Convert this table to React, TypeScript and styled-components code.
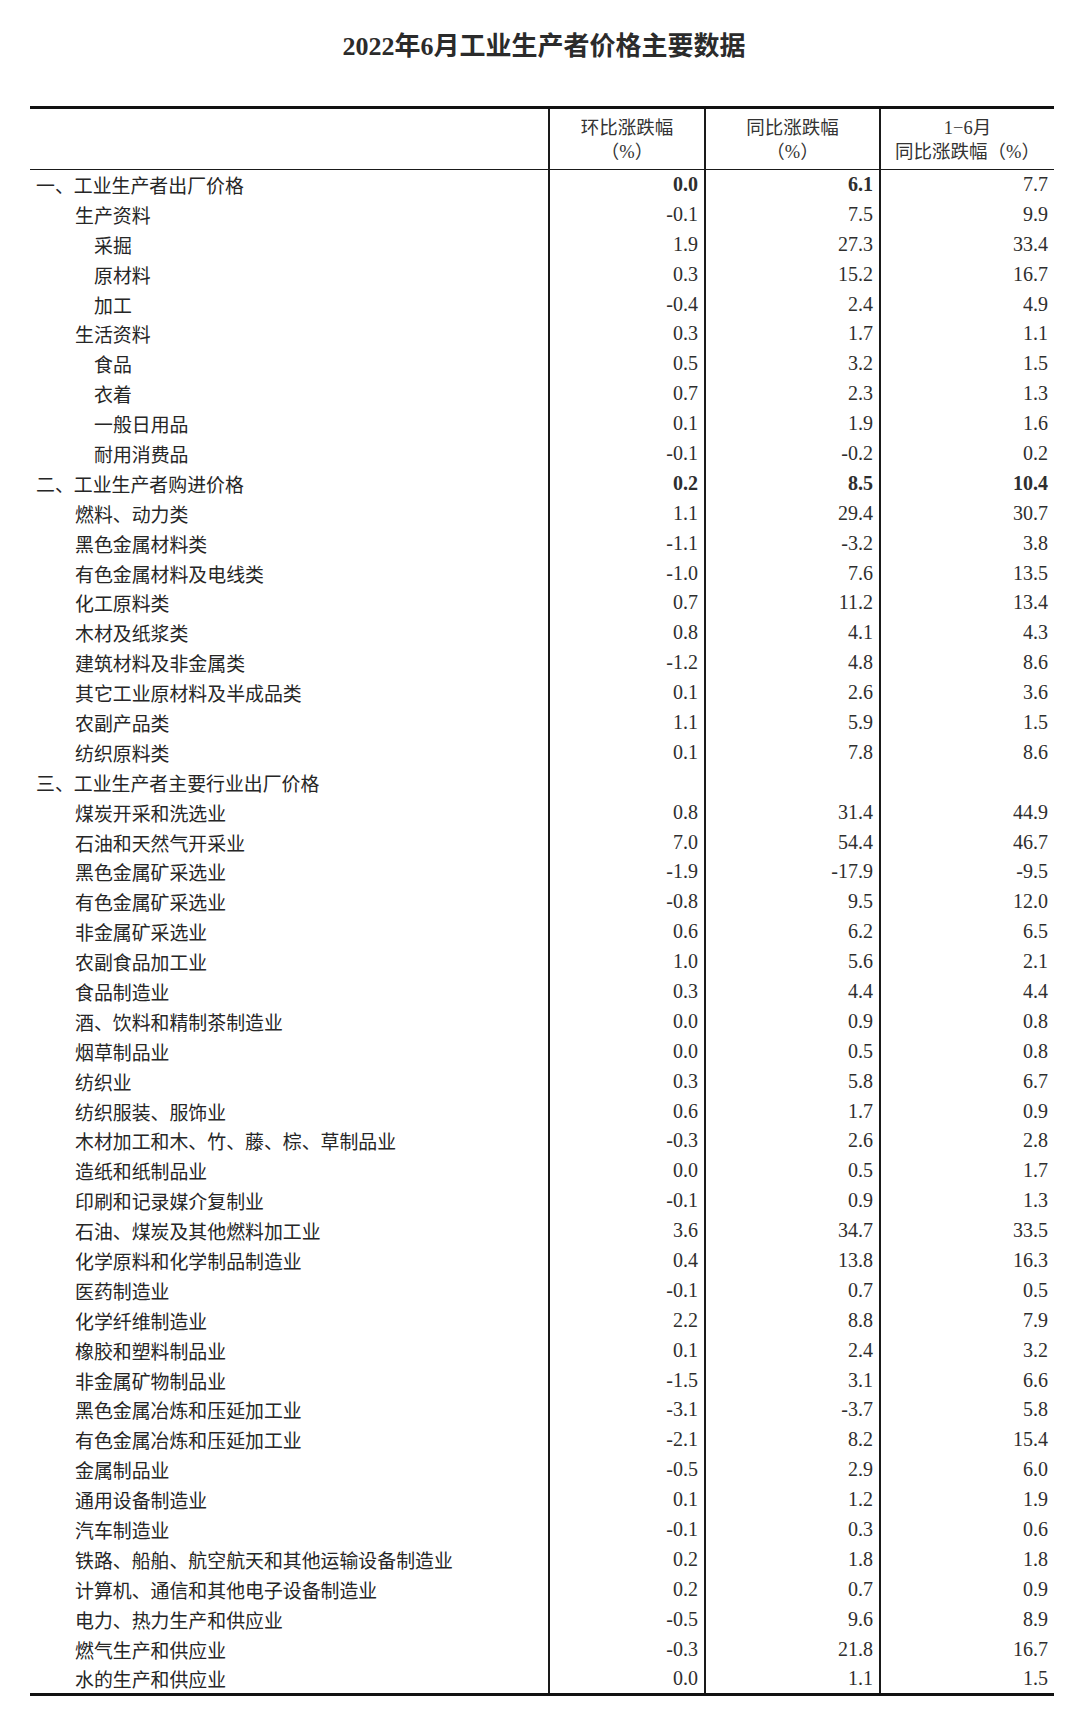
import React from "react"
import styled, { createGlobalStyle } from "styled-components"

type Row = {
  label: string
  level: 0 | 1 | 2
  values: string[]
  bold?: boolean[]
}

const rows: Row[] = [
  { label: "一、工业生产者出厂价格", level: 0, values: ["0.0", "6.1", "7.7"], bold: [true, true, false] },
  { label: "生产资料", level: 1, values: ["-0.1", "7.5", "9.9"] },
  { label: "采掘", level: 2, values: ["1.9", "27.3", "33.4"] },
  { label: "原材料", level: 2, values: ["0.3", "15.2", "16.7"] },
  { label: "加工", level: 2, values: ["-0.4", "2.4", "4.9"] },
  { label: "生活资料", level: 1, values: ["0.3", "1.7", "1.1"] },
  { label: "食品", level: 2, values: ["0.5", "3.2", "1.5"] },
  { label: "衣着", level: 2, values: ["0.7", "2.3", "1.3"] },
  { label: "一般日用品", level: 2, values: ["0.1", "1.9", "1.6"] },
  { label: "耐用消费品", level: 2, values: ["-0.1", "-0.2", "0.2"] },
  { label: "二、工业生产者购进价格", level: 0, values: ["0.2", "8.5", "10.4"], bold: [true, true, true] },
  { label: "燃料、动力类", level: 1, values: ["1.1", "29.4", "30.7"] },
  { label: "黑色金属材料类", level: 1, values: ["-1.1", "-3.2", "3.8"] },
  { label: "有色金属材料及电线类", level: 1, values: ["-1.0", "7.6", "13.5"] },
  { label: "化工原料类", level: 1, values: ["0.7", "11.2", "13.4"] },
  { label: "木材及纸浆类", level: 1, values: ["0.8", "4.1", "4.3"] },
  { label: "建筑材料及非金属类", level: 1, values: ["-1.2", "4.8", "8.6"] },
  { label: "其它工业原材料及半成品类", level: 1, values: ["0.1", "2.6", "3.6"] },
  { label: "农副产品类", level: 1, values: ["1.1", "5.9", "1.5"] },
  { label: "纺织原料类", level: 1, values: ["0.1", "7.8", "8.6"] },
  { label: "三、工业生产者主要行业出厂价格", level: 0, values: ["", "", ""] },
  { label: "煤炭开采和洗选业", level: 1, values: ["0.8", "31.4", "44.9"] },
  { label: "石油和天然气开采业", level: 1, values: ["7.0", "54.4", "46.7"] },
  { label: "黑色金属矿采选业", level: 1, values: ["-1.9", "-17.9", "-9.5"] },
  { label: "有色金属矿采选业", level: 1, values: ["-0.8", "9.5", "12.0"] },
  { label: "非金属矿采选业", level: 1, values: ["0.6", "6.2", "6.5"] },
  { label: "农副食品加工业", level: 1, values: ["1.0", "5.6", "2.1"] },
  { label: "食品制造业", level: 1, values: ["0.3", "4.4", "4.4"] },
  { label: "酒、饮料和精制茶制造业", level: 1, values: ["0.0", "0.9", "0.8"] },
  { label: "烟草制品业", level: 1, values: ["0.0", "0.5", "0.8"] },
  { label: "纺织业", level: 1, values: ["0.3", "5.8", "6.7"] },
  { label: "纺织服装、服饰业", level: 1, values: ["0.6", "1.7", "0.9"] },
  { label: "木材加工和木、竹、藤、棕、草制品业", level: 1, values: ["-0.3", "2.6", "2.8"] },
  { label: "造纸和纸制品业", level: 1, values: ["0.0", "0.5", "1.7"] },
  { label: "印刷和记录媒介复制业", level: 1, values: ["-0.1", "0.9", "1.3"] },
  { label: "石油、煤炭及其他燃料加工业", level: 1, values: ["3.6", "34.7", "33.5"] },
  { label: "化学原料和化学制品制造业", level: 1, values: ["0.4", "13.8", "16.3"] },
  { label: "医药制造业", level: 1, values: ["-0.1", "0.7", "0.5"] },
  { label: "化学纤维制造业", level: 1, values: ["2.2", "8.8", "7.9"] },
  { label: "橡胶和塑料制品业", level: 1, values: ["0.1", "2.4", "3.2"] },
  { label: "非金属矿物制品业", level: 1, values: ["-1.5", "3.1", "6.6"] },
  { label: "黑色金属冶炼和压延加工业", level: 1, values: ["-3.1", "-3.7", "5.8"] },
  { label: "有色金属冶炼和压延加工业", level: 1, values: ["-2.1", "8.2", "15.4"] },
  { label: "金属制品业", level: 1, values: ["-0.5", "2.9", "6.0"] },
  { label: "通用设备制造业", level: 1, values: ["0.1", "1.2", "1.9"] },
  { label: "汽车制造业", level: 1, values: ["-0.1", "0.3", "0.6"] },
  { label: "铁路、船舶、航空航天和其他运输设备制造业", level: 1, values: ["0.2", "1.8", "1.8"] },
  { label: "计算机、通信和其他电子设备制造业", level: 1, values: ["0.2", "0.7", "0.9"] },
  { label: "电力、热力生产和供应业", level: 1, values: ["-0.5", "9.6", "8.9"] },
  { label: "燃气生产和供应业", level: 1, values: ["-0.3", "21.8", "16.7"] },
  { label: "水的生产和供应业", level: 1, values: ["0.0", "1.1", "1.5"] },
]

const indent = [0, 39, 58]

const App = () => {
  return (
    <>
      <GlobalStyle />
      <Page>
        <Title>2022年6月工业生产者价格主要数据</Title>
        <Table>
          <colgroup>
            <col style={{ width: 519 }} />
            <col style={{ width: 156 }} />
            <col style={{ width: 175 }} />
            <col style={{ width: 174 }} />
          </colgroup>
          <thead>
            <tr>
              <HeadCell />
              <HeadCell>
                环比涨跌幅
                <br />
                （%）
              </HeadCell>
              <HeadCell>
                同比涨跌幅
                <br />
                （%）
              </HeadCell>
              <HeadCell>
                1−6月
                <br />
                同比涨跌幅（%）
              </HeadCell>
            </tr>
          </thead>
          <tbody>
            {rows.map((row) => (
              <BodyRow key={row.label}>
                <LabelCell $indent={indent[row.level]}>{row.label}</LabelCell>
                {row.values.map((v, i) => (
                  <NumCell key={i} $bold={row.bold ? row.bold[i] : false}>
                    {v}
                  </NumCell>
                ))}
              </BodyRow>
            ))}
          </tbody>
        </Table>
      </Page>
    </>
  )
}

export default App

const GlobalStyle = createGlobalStyle`
  html, body {
    margin: 0;
    padding: 0;
    background: #ffffff;
  }
  body {
    color: #262626;
    font-family: "Noto Sans CJK SC", sans-serif;
  }
`

const Page = styled.div`
  width: 1080px;
  height: 1724px;
  box-sizing: border-box;
  padding: 30px 26px 0 30px;
  background: #fff;
`

const Title = styled.h1`
  margin: 0 0 42px;
  height: 34px;
  line-height: 34px;
  text-align: center;
  font-family: "Liberation Serif", "Noto Sans CJK SC", serif;
  font-size: 26px;
  font-weight: 700;
  color: #2b2b2b;
  padding-left: 4px;
`

const Table = styled.table`
  width: 1024px;
  table-layout: fixed;
  border-collapse: collapse;
  border-top: 3px solid #111;
  border-bottom: 3px solid #111;
`

const HeadCell = styled.th`
  height: 59px;
  padding: 1px 0 0;
  vertical-align: middle;
  text-align: center;
  font-family: "Liberation Serif", "Noto Sans CJK SC", serif;
  font-size: 18.5px;
  font-weight: 400;
  line-height: 24px;
  color: #333;
  border-bottom: 1.5px solid #1a1a1a;
  & + & {
    border-left: 2px solid #1a1a1a;
  }
`

const BodyRow = styled.tr`
  height: 29.9px;
`

const LabelCell = styled.td<{ $indent: number }>`
  padding: 0 0 0 ${(p) => 6 + p.$indent}px;
  font-family: "Noto Sans CJK SC", sans-serif;
  font-size: 18.9px;
  line-height: 29px;
  white-space: nowrap;
  color: #262626;
`

const NumCell = styled.td<{ $bold: boolean }>`
  padding: 0 6px 0 0;
  text-align: right;
  font-family: "Liberation Serif", serif;
  font-size: 20px;
  line-height: 29px;
  font-weight: ${(p) => (p.$bold ? 700 : 400)};
  color: #2e2e2e;
  border-left: 2px solid #1a1a1a;
`
